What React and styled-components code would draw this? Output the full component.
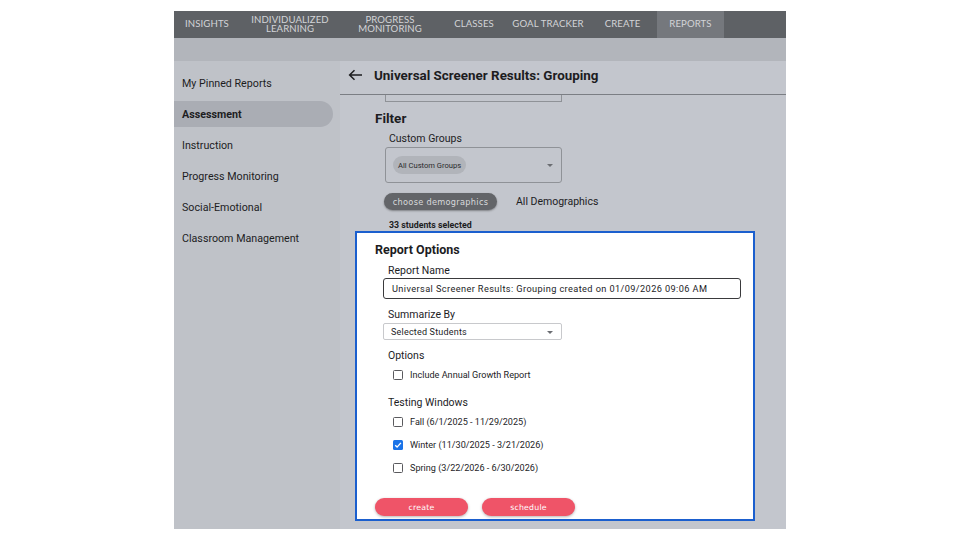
import React from "react";
import styled, { createGlobalStyle } from "styled-components";

const Global = createGlobalStyle`
  * { box-sizing: border-box; }
  body {
    margin: 0;
    background: #fff;
    font-family: Roboto, "Liberation Sans", sans-serif;
    color: #1d1d1f;
  }
`;

const navItems = [
  { label: "INSIGHTS", width: 66 },
  { label: "INDIVIDUALIZED LEARNING", width: 100 },
  { label: "PROGRESS MONITORING", width: 100 },
  { label: "CLASSES", width: 68 },
  { label: "GOAL TRACKER", width: 80 },
  { label: "CREATE", width: 69 },
  { label: "REPORTS", width: 67, active: true },
];

const sideItems = [
  "My Pinned Reports",
  "Assessment",
  "Instruction",
  "Progress Monitoring",
  "Social-Emotional",
  "Classroom Management",
];

const windows = [
  { label: "Fall (6/1/2025 - 11/29/2025)", checked: false },
  { label: "Winter (11/30/2025 - 3/21/2026)", checked: true },
  { label: "Spring (3/22/2026 - 6/30/2026)", checked: false },
];

export default function App() {
  return (
    <>
      <Global />
      <Frame>
        <NavBar>
          {navItems.map((n) => (
            <NavItem key={n.label} $w={n.width} $active={n.active}>
              {n.label}
            </NavItem>
          ))}
        </NavBar>
        <Band />
        <Body>
          <Sidebar>
            {sideItems.map((s) => (
              <SideItem key={s} $active={s === "Assessment"}>
                {s}
              </SideItem>
            ))}
          </Sidebar>
          <Main>
            <Header>
              <svg width="15" height="12" viewBox="0 0 15 12">
                <path
                  d="M14 6H2M6.5 1.2L1.6 6l4.9 4.8"
                  fill="none"
                  stroke="#1d1d1f"
                  strokeWidth="1.5"
                />
              </svg>
              <Title>Universal Screener Results: Grouping</Title>
            </Header>
            <CutBox />
            <Heading>Filter</Heading>
            <FieldLabel $left={49}>Custom Groups</FieldLabel>
            <GroupSelect>
              <Chip>All Custom Groups</Chip>
              <Caret />
            </GroupSelect>
            <DemoRow>
              <DarkButton>choose demographics</DarkButton>
              <DemoText>All Demographics</DemoText>
            </DemoRow>
            <Count>33 students selected</Count>
            <Panel>
              <PanelTitle>Report Options</PanelTitle>
              <PanelLabel $top={6}>Report Name</PanelLabel>
              <NameInput>
                Universal Screener Results: Grouping created on 01/09/2026 09:06 AM
              </NameInput>
              <PanelLabel $top={9}>Summarize By</PanelLabel>
              <SmallSelect>
                Selected Students
                <Caret />
              </SmallSelect>
              <PanelLabel $top={9}>Options</PanelLabel>
              <CheckRow $top={4}>
                <Box />
                Include Annual Growth Report
              </CheckRow>
              <PanelLabel $top={13}>Testing Windows</PanelLabel>
              {windows.map((w, i) => (
                <CheckRow key={w.label} $top={i === 0 ? 4 : 7}>
                  <Box $checked={w.checked}>
                    {w.checked && (
                      <svg width="8" height="8" viewBox="0 0 8 8">
                        <path
                          d="M1.2 4.2l1.9 1.9L6.9 1.9"
                          fill="none"
                          stroke="#fff"
                          strokeWidth="1.4"
                        />
                      </svg>
                    )}
                  </Box>
                  {w.label}
                </CheckRow>
              ))}
              <Actions>
                <RedButton>create</RedButton>
                <RedButton>schedule</RedButton>
              </Actions>
            </Panel>
          </Main>
        </Body>
      </Frame>
    </>
  );
}

const Frame = styled.div`
  width: 612px;
  height: 518px;
  margin: 11px auto 0;
  display: flex;
  flex-direction: column;
  overflow: hidden;
`;

const NavBar = styled.div`
  height: 27px;
  background: #5e6165;
  display: flex;
  flex-shrink: 0;
`;

const NavItem = styled.div`
  width: ${(p) => p.$w}px;
  height: 100%;
  padding-bottom: 1px;
  display: flex;
  align-items: center;
  justify-content: center;
  text-align: center;
  font-family: Lato, "DejaVu Sans", sans-serif;
  font-size: 9.6px;
  line-height: 9.5px;
  letter-spacing: 0.1px;
  color: #d3d4d7;
  background: ${(p) => (p.$active ? "#75787d" : "transparent")};
`;

const Band = styled.div`
  height: 23px;
  background: #b2b5bb;
  flex-shrink: 0;
`;

const Body = styled.div`
  flex: 1;
  display: flex;
  min-height: 0;
`;

const Sidebar = styled.div`
  width: 166px;
  background: #bfc2c8;
  padding-top: 9px;
  display: flex;
  flex-direction: column;
  gap: 5px;
`;

const SideItem = styled.div`
  width: 159px;
  height: 26px;
  padding-left: 8px;
  display: flex;
  align-items: center;
  font-size: 10.7px;
  font-weight: ${(p) => (p.$active ? 700 : 400)};
  color: #1d1d1f;
  background: ${(p) => (p.$active ? "#aaadb4" : "transparent")};
  border-radius: 0 13px 13px 0;
`;

const Main = styled.div`
  flex: 1;
  background: #c3c6cd;
  display: flex;
  flex-direction: column;
  align-items: flex-start;
`;

const Header = styled.div`
  width: 100%;
  height: 34px;
  padding: 0 0 5px 8px;
  display: flex;
  align-items: center;
  gap: 11px;
  border-bottom: 1.5px solid #7b7e84;
  flex-shrink: 0;
`;

const Title = styled.div`
  font-size: 13.4px;
  font-weight: 700;
`;

const CutBox = styled.div`
  width: 177px;
  height: 7px;
  margin-left: 45px;
  border: 1px solid #8f9297;
  border-top: none;
  flex-shrink: 0;
`;

const Heading = styled.div`
  margin: 8px 0 0 35px;
  font-size: 13.5px;
  line-height: 17px;
  font-weight: 700;
`;

const FieldLabel = styled.div`
  margin: 5px 0 0 ${(p) => p.$left}px;
  font-size: 10.5px;
  line-height: 14px;
`;

const GroupSelect = styled.div`
  position: relative;
  width: 177px;
  height: 36px;
  margin: 1px 0 0 45px;
  border: 1px solid #8f9297;
  border-radius: 3px;
  padding-left: 7px;
  display: flex;
  align-items: center;
`;

const Chip = styled.div`
  height: 18px;
  padding: 0 5px;
  border-radius: 9px;
  background: #b1b4ba;
  display: flex;
  align-items: center;
  font-size: 7.6px;
  color: #2a2a2c;
`;

const Caret = styled.span`
  position: absolute;
  right: 8px;
  top: 50%;
  margin-top: -1px;
  border-left: 3px solid transparent;
  border-right: 3px solid transparent;
  border-top: 3px solid #6b6d72;
`;

const DemoRow = styled.div`
  margin: 10px 0 0 44px;
  display: flex;
  align-items: center;
  gap: 19px;
`;

const DarkButton = styled.div`
  width: 113px;
  height: 17px;
  border-radius: 9px;
  background: #636569;
  box-shadow: 0 1px 2px rgba(0, 0, 0, 0.35);
  color: #d8d9db;
  font-family: "DejaVu Sans", sans-serif;
  font-size: 8.2px;
  letter-spacing: 0.3px;
  display: flex;
  align-items: center;
  justify-content: center;
`;

const DemoText = styled.div`
  font-size: 10.5px;
`;

const Count = styled.div`
  margin: 10px 0 0 49px;
  font-size: 8.8px;
  line-height: 11px;
  font-weight: 700;
`;

const Panel = styled.div`
  width: 400px;
  height: 290px;
  margin: 0 0 0 15px;
  background: #fff;
  border: 2px solid #1b5fce;
  padding: 9px 0 0 18px;
  display: flex;
  flex-direction: column;
  align-items: flex-start;
  flex-shrink: 0;
`;

const PanelTitle = styled.div`
  font-size: 12.5px;
  line-height: 16px;
  font-weight: 700;
`;

const PanelLabel = styled.div`
  margin: ${(p) => p.$top}px 0 0 13px;
  font-size: 10.5px;
  line-height: 14px;
`;

const NameInput = styled.div`
  width: 358px;
  height: 21px;
  margin-left: 8px;
  border: 1px solid #3a3a3c;
  border-radius: 3px;
  padding-left: 8px;
  display: flex;
  align-items: center;
  font-size: 9.2px;
  letter-spacing: 0.4px;
`;

const SmallSelect = styled.div`
  position: relative;
  width: 179px;
  height: 17px;
  margin: 1px 0 0 8px;
  border: 1px solid #c8c9cc;
  border-radius: 2px;
  padding-left: 7px;
  display: flex;
  align-items: center;
  font-size: 9px;
  letter-spacing: 0.2px;
`;

const CheckRow = styled.div`
  margin: ${(p) => p.$top}px 0 0 18px;
  height: 16px;
  display: flex;
  align-items: center;
  gap: 7px;
  font-size: 9.1px;
`;

const Box = styled.span`
  width: 10px;
  height: 10px;
  border-radius: 1.5px;
  border: ${(p) => (p.$checked ? "none" : "1.4px solid #5a5a5e")};
  background: ${(p) => (p.$checked ? "#1a73e8" : "#fff")};
  display: flex;
  align-items: center;
  justify-content: center;
`;

const Actions = styled.div`
  margin-top: 22px;
  display: flex;
  gap: 14px;
`;

const RedButton = styled.div`
  width: 93px;
  height: 18px;
  border-radius: 9px;
  background: #ef5468;
  box-shadow: 0 1px 3px rgba(0, 0, 0, 0.3);
  color: #fff;
  font-family: "DejaVu Sans", sans-serif;
  font-size: 7.8px;
  letter-spacing: 0.2px;
  display: flex;
  align-items: center;
  justify-content: center;
`;
